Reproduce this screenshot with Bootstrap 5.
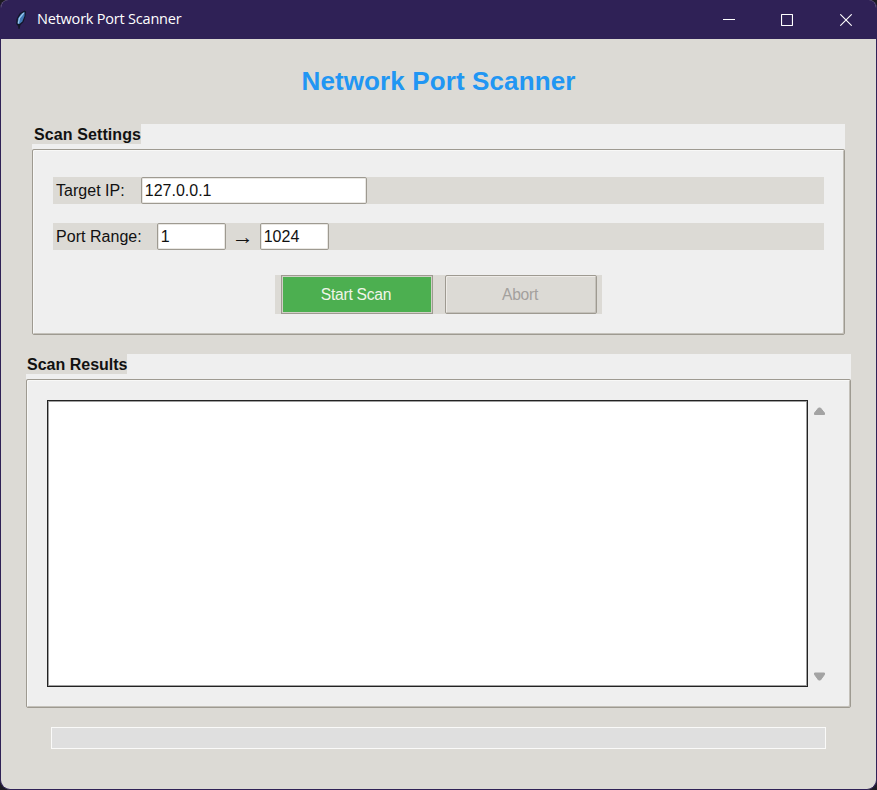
<!DOCTYPE html>
<html lang="en">
<head>
<meta charset="utf-8">
<meta name="viewport" content="width=device-width, initial-scale=1">
<title>Network Port Scanner</title>
<link href="https://cdn.jsdelivr.net/npm/bootstrap@5.3.0/dist/css/bootstrap.min.css" rel="stylesheet">
<style>
:root { --face:#dcdad5; --panel:#efefef; --edge:#9e9a91; --frame:#2f2156; }
html, body { height:100%; overflow:hidden; }
body { background:#1c1a22; font-family:"Liberation Sans", Arial, sans-serif; font-size:16px; line-height:20px; color:#111; }
.app-window { width:877px; height:790px; background:var(--face); border:1px solid var(--frame); border-top:0; border-radius:8px 8px 10px 10px; }
.titlebar { height:39px; background:var(--frame); color:#fff; font-family:"Open Sans", "Noto Sans", sans-serif; margin:0 -1px; padding:0 2px 0 14px; }
.caption-text { font-size:14.5px; margin-left:9px; padding-bottom:1px; letter-spacing:-.21px; }
.win-btn { width:58.5px; height:39px; background:none; border:0; padding:0; color:#fff; }
.app-title { font-size:26px; line-height:30px; font-weight:700; color:#2196f3; letter-spacing:.12px; margin:27px 0 28px; }
.group { display:flex; flex-direction:column; }
.group-settings { margin:0 31px; height:211px; }
.group-results { margin:19px 25px 0; height:354px; }
.group-head { height:25px; background:var(--panel); flex:none; }
.group-label { background:var(--face); height:20px; font-weight:700; padding:1px 0 0 1px; box-shadow:-1px 0 var(--face); margin-left:1px; white-space:nowrap; letter-spacing:.1px; }
.group-results .group-label { padding-left:0; letter-spacing:0; }
.group-box { flex:1; min-height:0; background:var(--panel); border:1px solid var(--edge); border-radius:2px; box-shadow:inset 1px 1px #f8f8f7, inset -1px -1px #c4c1ba; }
.group-settings .group-box { padding:27px 20px 0; }
.group-results .group-box { padding:20px 20px; }
.strip { background:var(--face); height:27px; padding-left:3px; }
.strip + .strip { margin-top:19px; }
.strip label { letter-spacing:.03px; padding-top:1px; }
.entry { height:27px; border:1px solid var(--edge); border-radius:2px; background:#fff; padding:1px 0 0 3px; font-size:16px; color:#111; box-shadow:inset 0 0 0 1px #e9e7e3; outline:0; }
.entry-first { margin-left:15px; }
.arrow { width:34px; text-align:center; font-size:22px; line-height:20px; }
.tk-btn { width:152px; height:39px; border:1px solid var(--edge); border-radius:2px; padding:1px 2px 0 0; font-size:15.600px; letter-spacing:-.25px; background:var(--face); color:#a3a09d; box-shadow:inset 1px 1px #eeebe7, inset -1px -1px #c4c1ba; }
.tk-btn-go { background:#4caf50; color:#f0f5e9; border-radius:0; box-shadow:inset 0 0 0 1px #d0d0c6; }
.btn-strip { background:var(--face); width:327px; height:39px; gap:12px; margin:25px auto 0; padding-left:6px; }
.output { width:761px; height:287px; background:#fff; border:1px solid #222; box-shadow:inset 1px 1px #a0a0a0, inset -1px -1px #a0a0a0; resize:none; padding:0; outline:0; }
.scroll-col { padding:7px 0 6px; margin-left:5px; }
.progress-track { height:22px; margin:19px 50px 0; background:#dfdfdf; border:1px solid #fafaf9; }
</style>
</head>
<body>
<div class="app-window overflow-hidden">
  <header class="titlebar d-flex align-items-center">
    <svg width="14" height="20" viewBox="0 0 14 20"><path d="M4.500 19 4 16 2.200 14 2.500 9 5.500 3.500 10.500 .5 12 1.500 11.500 6 9.500 12 6.500 15 5.500 19z" fill="#131528"/><path d="M3.500 13.500 4 8.500 7 4 10.700 1.800 10.500 6 8.300 11.500 5.500 14z" fill="#3f78b5"/><path d="M4.300 13.500 5.500 8 9.800 2.800" stroke="#9fcbee" stroke-width="1.200" fill="none"/></svg>
    <span class="caption-text">Network Port Scanner</span>
    <div class="d-flex ms-auto">
      <button class="win-btn" aria-label="Minimize"><svg class="d-block mx-auto" width="12" height="12"><path d="M0 5.500h12" stroke="#fff"/></svg></button>
      <button class="win-btn" aria-label="Maximize"><svg class="d-block mx-auto" width="12" height="12"><rect x=".5" y=".5" width="11" height="11" rx=".6" fill="none" stroke="#fff" stroke-width="1.200"/></svg></button>
      <button class="win-btn" aria-label="Close"><svg class="d-block mx-auto" width="12" height="12"><path d="M.3.3 11.700 11.700M11.700.3.3 11.700" stroke="#fff" stroke-width="1.100"/></svg></button>
    </div>
  </header>
  <main>
    <h1 class="app-title text-center">Network Port Scanner</h1>
    <section class="group group-settings">
      <div class="group-head d-flex"><div class="group-label" style="width:108px">Scan Settings</div></div>
      <div class="group-box">
        <div class="strip d-flex align-items-center"><label for="ip">Target IP:</label><input id="ip" class="entry ms-3" style="width:226px" value="127.0.0.1"></div>
        <div class="strip d-flex align-items-center"><label for="p1">Port Range:</label><input id="p1" class="entry entry-first" style="width:69px" value="1">
          <span class="arrow">→</span>
          <input class="entry" style="width:69px" value="1024" aria-label="Last port"></div>
        <div class="btn-strip d-flex"><button class="tk-btn tk-btn-go">Start Scan</button><button class="tk-btn" disabled>Abort</button></div>
      </div>
    </section>
    <section class="group group-results">
      <div class="group-head d-flex"><div class="group-label" style="width:100px">Scan Results</div></div>
      <div class="group-box d-flex">
        <textarea class="output" aria-label="Scan results"></textarea>
        <div class="scroll-col d-flex flex-column justify-content-between">
          <svg width="13" height="9"><path d="M5.500 1h2L11.500 6v1.500h-10V6z" fill="#a3a3a3" stroke="#a3a3a3" stroke-linejoin="round"/></svg>
          <svg width="13" height="9"><path d="M5.500 8h2L11.500 2.500V1h-10v1.500z" fill="#a3a3a3" stroke="#a3a3a3" stroke-linejoin="round"/></svg>
        </div>
      </div>
    </section>
    <div class="progress-track"></div>
  </main>
</div>
<script src="https://cdn.jsdelivr.net/npm/bootstrap@5.3.0/dist/js/bootstrap.bundle.min.js"></script>
</body>
</html>
